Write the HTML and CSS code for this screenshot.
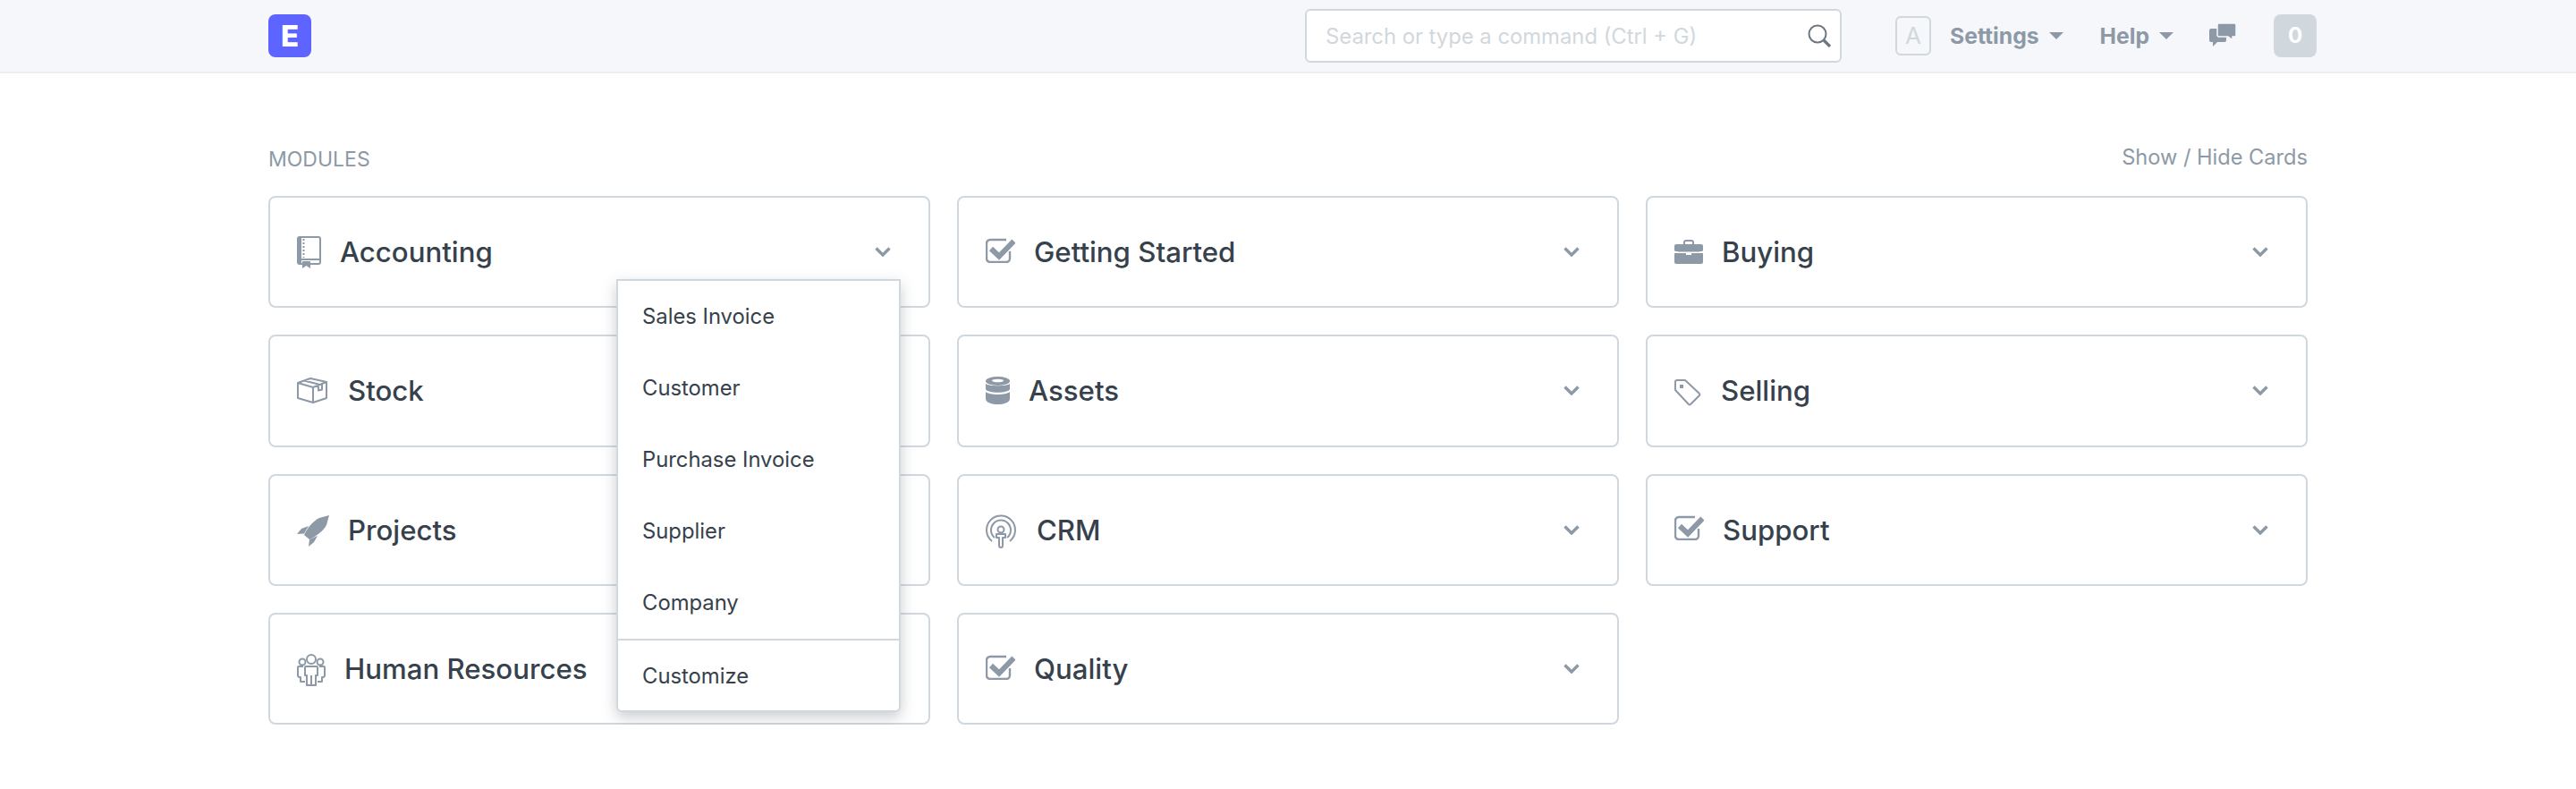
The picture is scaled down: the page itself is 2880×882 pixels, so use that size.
FILE: index.html
```html
<!DOCTYPE html>
<html lang="en">
<head>
<meta charset="utf-8">
<title>Desk</title>
<link rel="stylesheet" href="styles.css">
</head>
<body>
<svg class="defs" width="0" height="0" aria-hidden="true">
  <defs>
    <symbol id="chev" viewBox="0 0 18 11"><path d="M1.500 1.500l7.500 7.500 7.500-7.500" fill="none" stroke="#8d99a6" stroke-width="3.400"/></symbol>
    <symbol id="check" viewBox="0 0 33 28">
      <path d="M27 15v8a4 4 0 0 1-4 4H5a4 4 0 0 1-4-4V6a4 4 0 0 1 4-4h18" fill="none" stroke="#8d99a6" stroke-width="2.400"/>
      <path d="M6 12l9 8.500L31.500 3.500" fill="none" stroke="#8d99a6" stroke-width="6"/>
    </symbol>
  </defs>
</svg>
<header class="topbar">
  <div class="topbar-inner">
    <div class="logo">E</div>
    <div class="search">
      <span class="search-text">Search or type a command (Ctrl + G)</span>
      <svg class="search-icon" width="27" height="26" viewBox="0 0 27 26"><circle cx="11" cy="11" r="9.500" fill="none" stroke="#6c7680" stroke-width="2"/><path d="M18 18l7 7" stroke="#6c7680" stroke-width="3.200"/></svg>
    </div>
    <div class="avatar">A</div>
    <span class="nav-link settings">Settings<i class="caret"></i></span>
    <span class="nav-link help">Help<i class="caret"></i></span>
    <svg class="chat" width="30" height="26" viewBox="0 0 30 26"><path d="M2 6h15a2 2 0 0 1 2 2v11a2 2 0 0 1-2 2H9l-5 5v-5H2a2 2 0 0 1-2-2V8a2 2 0 0 1 2-2z" fill="#8d99a6"/><path d="M11 0h17a2 2 0 0 1 2 2v11a2 2 0 0 1-2 2h-2v4l-5-4H11a2 2 0 0 1-2-2V2a2 2 0 0 1 2-2z" fill="#8d99a6" stroke="#f5f7fa" stroke-width="1.500"/></svg>
    <div class="badge">0</div>
  </div>
</header>
<main class="page">
  <div class="page-head">
    <span class="modules-label">MODULES</span>
    <span class="show-hide">Show / Hide Cards</span>
  </div>
  <section class="grid">
    <article class="card has-menu">
      <svg class="ico" width="27" height="36" viewBox="0 0 27 36"><rect x="1" y="1" width="25" height="30" rx="2" fill="none" stroke="#8d99a6" stroke-width="2"/><rect x="1" y="1" width="4" height="30" fill="#8d99a6"/><path d="M7.500 3v21" stroke="#8d99a6" stroke-width="2" stroke-dasharray="2 2"/><path d="M1 26h25" stroke="#8d99a6" stroke-width="2"/><path d="M6 28h9v8l-4.500-3L6 36z" fill="#8d99a6"/></svg>
      <span class="card-title">Accounting</span>
      <svg class="chev"><use href="#chev"/></svg>
      <div class="menu">
        <div class="menu-item">Sales Invoice</div>
        <div class="menu-item">Customer</div>
        <div class="menu-item">Purchase Invoice</div>
        <div class="menu-item">Supplier</div>
        <div class="menu-item">Company</div>
        <div class="menu-divider"></div>
        <div class="menu-item">Customize</div>
      </div>
    </article>
    <article class="card">
      <svg class="ico ico-check" width="33" height="28"><use href="#check"/></svg>
      <span class="card-title">Getting Started</span>
      <svg class="chev"><use href="#chev"/></svg>
    </article>
    <article class="card">
      <svg class="ico" width="32" height="27" viewBox="0 0 32 27"><path d="M11 7V3a2 2 0 0 1 2-2h6a2 2 0 0 1 2 2v4" fill="none" stroke="#8d99a6" stroke-width="2"/><path d="M2 5h28a2 2 0 0 1 2 2v5a2 2 0 0 1-2 1H2a2 2 0 0 1-2-1V7a2 2 0 0 1 2-2z" fill="#8d99a6"/><path d="M0 15h13v2h6v-2h13v10a2 2 0 0 1-2 2H2a2 2 0 0 1-2-2z" fill="#8d99a6"/><path d="M4 13h24" stroke="#8d99a6"/></svg>
      <span class="card-title">Buying</span>
      <svg class="chev"><use href="#chev"/></svg>
    </article>
    <article class="card">
      <svg class="ico ico-wide" width="34" height="29" viewBox="0 0 34 29"><path d="M1 6l14-5 18 4v18l-15 5-17-5z M1 6l17 5 15-6 M18 11v17 M8 3.500l16 4v7l4-1 0-7.500" fill="none" stroke="#8d99a6" stroke-width="2" stroke-linejoin="round"/></svg>
      <span class="card-title">Stock</span>
      <svg class="chev"><use href="#chev"/></svg>
    </article>
    <article class="card">
      <svg class="ico" width="27" height="31" viewBox="0 0 27 31"><ellipse cx="13.500" cy="5" rx="13.500" ry="5" fill="#8d99a6"/><ellipse cx="13.500" cy="4.500" rx="6.500" ry="1.800" fill="#fff"/><path d="M0 8c3 3 24 3 27 0v6c-2 5-25 5-27 0z" fill="#8d99a6"/><path d="M0 17c4 4 23 4 27 0v8c-1 8-26 8-27 0z" fill="#8d99a6"/></svg>
      <span class="card-title">Assets</span>
      <svg class="chev"><use href="#chev"/></svg>
    </article>
    <article class="card">
      <svg class="ico ico-wide ico-low" width="29" height="29" viewBox="0 0 29 29"><path d="M3 1h9l16 15a1.500 1.500 0 0 1 0 2L18 28a1.500 1.500 0 0 1-2 0L1 12V3a2 2 0 0 1 2-2z" fill="none" stroke="#8d99a6" stroke-width="2" stroke-linejoin="round"/><rect x="6" y="6" width="4" height="4" fill="#8d99a6"/></svg>
      <span class="card-title">Selling</span>
      <svg class="chev"><use href="#chev"/></svg>
    </article>
    <article class="card">
      <svg class="ico ico-low" width="36" height="35" viewBox="0 0 36 35"><path d="M36 0L25 3C19 6 12 13 8 22l6 5c8-4 16-10 19-16z" fill="#8d99a6"/><path d="M13 12L5 15 0 21l8-.500z" fill="#8d99a6"/><path d="M23 23l-9 4-1 8 6-5z" fill="#8d99a6"/></svg>
      <span class="card-title">Projects</span>
      <svg class="chev"><use href="#chev"/></svg>
    </article>
    <article class="card">
      <svg class="ico ico-wide ico-low" width="34" height="36" viewBox="0 0 34 36"><path d="M7 29a16 16 0 1 1 20 0M10 25a11 11 0 1 1 14 0" fill="none" stroke="#8d99a6" stroke-width="2"/><circle cx="17" cy="16" r="3.500" fill="none" stroke="#8d99a6" stroke-width="2"/><path d="M12 21h10v4h-3v9a2 2 0 0 1-4 0v-9h-3z" fill="none" stroke="#8d99a6" stroke-width="2" stroke-linejoin="round"/></svg>
      <span class="card-title">CRM</span>
      <svg class="chev"><use href="#chev"/></svg>
    </article>
    <article class="card">
      <svg class="ico ico-check" width="33" height="28"><use href="#check"/></svg>
      <span class="card-title">Support</span>
      <svg class="chev"><use href="#chev"/></svg>
    </article>
    <article class="card">
      <svg class="ico ico-low" width="32" height="36" viewBox="0 0 32 36"><g fill="none" stroke="#8d99a6" stroke-width="2" stroke-linejoin="round"><circle cx="16" cy="6" r="5"/><circle cx="6" cy="9" r="3.500"/><circle cx="26" cy="9" r="3.500"/><path d="M10 14h12a1 1 0 0 1 1 1v9h-2v11h-10V24H9v-9a1 1 0 0 1 1-1zM16 24v11"/><path d="M7 14H2a1 1 0 0 0-1 1v9a2 2 0 0 0 2 2h1v5h5M25 14h5a1 1 0 0 1 1 1v9a2 2 0 0 1-2 2h-1v5h-5"/></g></svg>
      <span class="card-title">Human Resources</span>
      <svg class="chev"><use href="#chev"/></svg>
    </article>
    <article class="card">
      <svg class="ico ico-check" width="33" height="28"><use href="#check"/></svg>
      <span class="card-title">Quality</span>
      <svg class="chev"><use href="#chev"/></svg>
    </article>
  </section>
</main>
</body>
</html>
```
FILE: styles.css
```css
* { box-sizing: border-box; }
html, body { margin: 0; padding: 0; background: #fff; }
body { font-family: Inter, "Liberation Sans", sans-serif; color: #36414c; }
.defs { position: absolute; }

.topbar { height: 82px; background: #f5f7fa; border-bottom: 2px solid #ebeff2; }
.topbar-inner { width: 2290px; margin-left: 300px; height: 80px; display: flex; align-items: center; }
.logo { width: 48px; height: 48px; border-radius: 8px; background: #5e64ff; color: #fff; font-weight: 800; font-size: 33px; line-height: 48px; text-align: center; }
.search { width: 600px; height: 60px; margin-left: auto; background: #fff; border: 2px solid #d1d8dd; border-radius: 6px; display: flex; align-items: center; padding: 0 9px 0 21px; justify-content: space-between; }
.search-text { font-size: 23.800px; color: #d1d8dd; }
.avatar { width: 40px; height: 44px; margin-left: 60px; border: 2px solid #d1d8dd; border-radius: 6px; color: #d1d8dd; font-size: 26px; line-height: 40px; text-align: center; }
.nav-link { font-size: 24.700px; font-weight: 700; color: #8d99a6; display: flex; align-items: center; }
.settings { margin-left: 21px; }
.help { margin-left: 41px; }
.caret { width: 0; height: 0; border-left: 8px solid transparent; border-right: 8px solid transparent; border-top: 8px solid #8d99a6; margin-left: 11px; }
.chat { margin-left: 40px; margin-top: -2px; }
.badge { width: 48px; height: 48px; margin-left: 42px; background: #d1d8dd; border-radius: 8px; color: #fff; font-weight: 700; font-size: 24px; line-height: 48px; text-align: center; }

.page { width: 2280px; margin-left: 300px; }
.page-head { display: flex; justify-content: space-between; align-items: flex-start; height: 137px; padding-top: 80px; line-height: 28px; }
.modules-label { font-size: 23px; color: #8d99a6; padding-top: 2px; }
.show-hide { font-size: 23.600px; color: #8d99a6; }
.grid { display: grid; grid-template-columns: repeat(3, 740px); column-gap: 30px; row-gap: 30px; }
.card { position: relative; height: 125.330px; border: 2px solid #d1d8dd; border-radius: 8px; display: flex; align-items: center; padding: 0 30px; }
.ico { margin-right: 21px; flex: none; overflow: visible; }
.ico-wide { margin-right: 23px; }
.ico-check { margin-top: -4px; }
.ico-low { margin-top: 3px; }
.card-title { font-size: 31.200px; font-weight: 500; color: #36414c; padding-top: 1px; }
.chev { width: 18px; height: 11px; margin-left: auto; margin-right: 12px; flex: none; }

.menu { position: absolute; left: 387px; top: 91px; width: 318px; height: 484px; z-index: 5; background: #fff; border: 2px solid #d1d8dd; border-radius: 0 0 6px 6px; box-shadow: 0 6px 16px rgba(100, 110, 125, 0.35); }
.menu-item { height: 80px; line-height: 80px; padding-left: 27px; font-size: 23.800px; color: #36414c; }
.menu-divider { height: 2px; background: #d1d8dd; }
```
